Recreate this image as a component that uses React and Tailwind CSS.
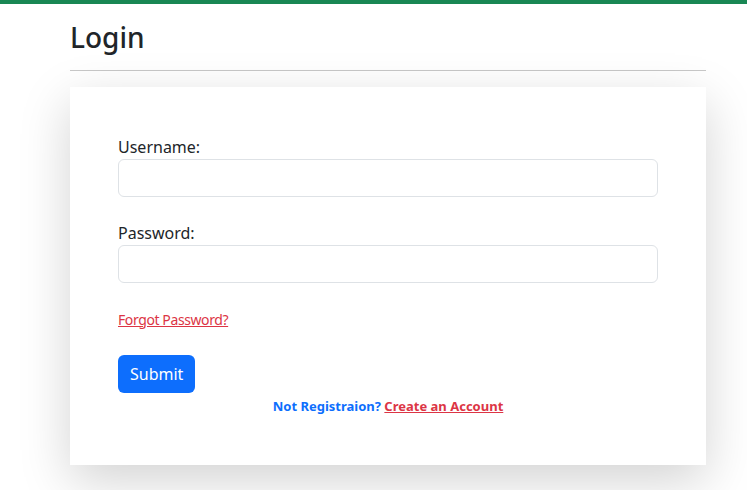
export default function App() {
  const font = { fontFamily: '"Segoe UI", "Noto Sans", "Liberation Sans", sans-serif' };
  return (
    <div className="min-h-[490px] bg-white text-[#212529]" style={font}>
      <div className="h-[4px] bg-[#198754]" />
      <div className="mx-[70px] w-[636px]">
        <h2 className="mt-[17px] text-[28px] font-medium leading-[1.2] text-[#212529]">Login</h2>
        <hr className="mt-[15px] border-0 border-t border-[#c8c8c8]" />
        <div className="mt-[16px] bg-white px-[48px] pt-[48px] pb-[49px] shadow-[0_1rem_3rem_rgba(0,0,0,0.175)]">
          <label className="block text-[16px] leading-[24px]">Username:</label>
          <input className="block h-[38px] w-full rounded-[6px] border border-[#dee2e6] px-3" />
          <label className="mt-[24px] block text-[16px] leading-[24px]">Password:</label>
          <input type="password" className="block h-[38px] w-full rounded-[6px] border border-[#dee2e6] px-3" />
          <div className="mt-[26px] text-[14px] leading-[21px] tracking-[-0.4px]">
            <a href="#" className="text-[#dc3545] underline">Forgot Password?</a>
          </div>
          <button className="mt-[25px] h-[38px] rounded-[6px] bg-[#0d6efd] px-[12px] text-[16px] text-white">Submit</button>
          <p className="mt-[3px] text-center text-[13px] font-bold leading-[20px] text-[#0d6efd]">
            Not Registraion? <a href="#" className="text-[#dc3545] underline">Create an Account</a>
          </p>
        </div>
      </div>
    </div>
  );
}
